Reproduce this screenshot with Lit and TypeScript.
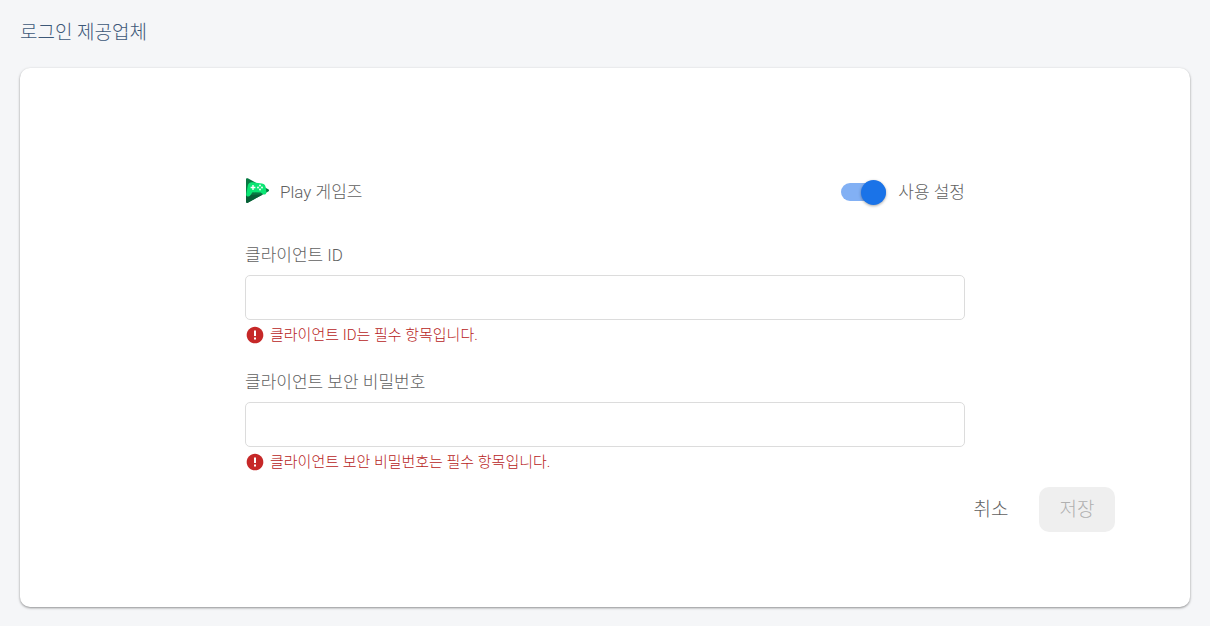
import { LitElement, html, css } from "lit";
import { customElement, property, state } from "lit/decorators.js";

@customElement("provider-field")
class ProviderField extends LitElement {
  @property() label = "";
  @property() error = "";
  @property() type = "text";

  static styles = css`
    :host {
      display: block;
    }
    .label {
      display: block;
      font-size: 17px;
      line-height: 24px;
      color: #616161;
    }
    .input {
      display: block;
      box-sizing: border-box;
      width: 100%;
      height: 45px;
      margin: 8px 0 5px;
      padding: 0 12px;
      border: 1px solid #dcdcdc;
      border-radius: 5px;
      background: #fff;
      font: inherit;
      font-size: 17px;
      outline: none;
    }
    .error {
      display: flex;
      align-items: center;
      gap: 5px;
      margin: 0;
      font-size: 15px;
      line-height: 20px;
      color: #b71c1c;
    }
    .icon {
      flex: none;
      width: 20px;
      height: 20px;
    }
  `;

  render() {
    return html`
      <label class="label" for="field">${this.label}</label>
      <input class="input" id="field" type=${this.type} aria-invalid="true" aria-describedby="error" />
      <p class="error" id="error">
        <svg class="icon" viewBox="0 0 24 24" aria-hidden="true">
          <path fill="#c62828" d="M12 2C6.480 2 2 6.480 2 12s4.480 10 10 10 10-4.480 10-10S17.520 2 12 2z" />
          <path fill="#fff" d="M10.800 6.500h2.400v6.700h-2.400zM10.800 15h2.400v2.400h-2.400z" />
        </svg>
        <span>${this.error}</span>
      </p>
    `;
  }
}

@customElement("app-root")
class AppRoot extends LitElement {
  @state() enabled = true;

  static styles = css`
    :host {
      display: block;
      box-sizing: border-box;
      min-height: 100vh;
      padding: 16px 20px 19px;
      background: #f5f6f8;
      font-family: Roboto, "Noto Sans CJK KR", sans-serif;
      font-weight: 300;
    }
    .title {
      margin: 0 0 18px;
      font-size: 19px;
      line-height: 34px;
      font-weight: 300;
      color: #3d5878;
    }
    .card {
      padding: 107px 75px 75px;
      border-radius: 10px;
      background: #fff;
      box-shadow: 0 1px 3px rgba(0, 0, 0, 0.26), 0 1px 2px rgba(0, 0, 0, 0.2);
    }
    .form {
      display: grid;
      gap: 25px;
      max-width: 720px;
      margin: 0 auto;
    }
    .head {
      display: flex;
      align-items: center;
      justify-content: space-between;
      height: 34px;
      margin-bottom: 9px;
      font-size: 17px;
      line-height: 24px;
      color: #616161;
    }
    .provider {
      display: flex;
      align-items: center;
      gap: 10px;
    }
    .logo {
      width: 25px;
      height: 28px;
    }
    .toggle {
      display: flex;
      align-items: center;
      gap: 12px;
      cursor: pointer;
    }
    .switch {
      appearance: none;
      display: flex;
      align-items: center;
      justify-content: flex-start;
      width: 45px;
      height: 18px;
      margin: 0;
      border-radius: 9px;
      background: #bdbdbd;
      cursor: pointer;
    }
    .switch::before {
      content: "";
      width: 25px;
      height: 25px;
      flex: none;
      border-radius: 50%;
      background: #fafafa;
      box-shadow: 0 1px 3px rgba(0, 0, 0, 0.35);
    }
    .switch:checked {
      justify-content: flex-end;
      background: #82b0f4;
    }
    .switch:checked::before {
      background: #1a73e8;
    }
    .actions {
      display: flex;
      justify-content: flex-end;
      gap: 10px;
      margin-top: 15px;
    }
    .button {
      min-width: 76px;
      height: 45px;
      padding: 0 20px;
      border: 0;
      border-radius: 10px;
      background: transparent;
      font: inherit;
      font-size: 19px;
      line-height: 24px;
      color: #616161;
    }
    .button:disabled {
      background: #efefef;
      color: #b0b0b0;
    }
  `;

  private onToggle(event: Event) {
    this.enabled = (event.target as HTMLInputElement).checked;
  }

  render() {
    return html`
      <h1 class="title">로그인 제공업체</h1>
      <main class="card">
        <div class="form">
          <div class="head">
            <div class="provider">
              <svg class="logo" viewBox="0 1 25 28" aria-hidden="true">
                <path fill="#087a43" d="M1 2.200C1 1.200 2 .900 2.800 1.300L23.300 12.300C24.300 13 24.300 14 23.300 14.600L2.800 25.700C2 26.200 1 25.800 1 24.800Z" />
                <path fill="#075f36" d="M3 18L18 17.500L2.800 25.700C2 26.200 1 25.800 1 24.800V19Z" />
                <path fill="#0be573" d="M2.800 8.500C3.400 5.800 5.500 4.900 8 5.300L17 6.500C19.500 6.900 20.300 8.200 20.800 10.700L21.300 14.500C21.500 17.400 19.500 18.200 17.700 16.900L15.800 15.500L7.500 15.300L5.200 18.400C3.600 20.300 1 19.500 1.300 17Z" />
                <path fill="#fff" d="M7.300 8.100H8.700V9.800H10.400V11.200H8.700V12.900H7.300V11.200H5.600V9.800H7.300Z" />
                <g fill="#fff"><circle cx="15" cy="8.500" r=".9" /><circle cx="15" cy="12.500" r=".9" /><circle cx="13" cy="10.500" r=".9" /><circle cx="17" cy="10.500" r=".9" /></g>
              </svg>
              <span>Play 게임즈</span>
            </div>
            <label class="toggle">
              <input class="switch" type="checkbox" role="switch" .checked=${this.enabled} @change=${this.onToggle} />
              <span>사용 설정</span>
            </label>
          </div>
          <provider-field label="클라이언트 ID" error="클라이언트 ID는 필수 항목입니다."></provider-field>
          <provider-field label="클라이언트 보안 비밀번호" type="password" error="클라이언트 보안 비밀번호는 필수 항목입니다."></provider-field>
        </div>
        <div class="actions">
          <button class="button" type="button">취소</button>
          <button class="button" type="button" disabled>저장</button>
        </div>
      </main>
    `;
  }
}
